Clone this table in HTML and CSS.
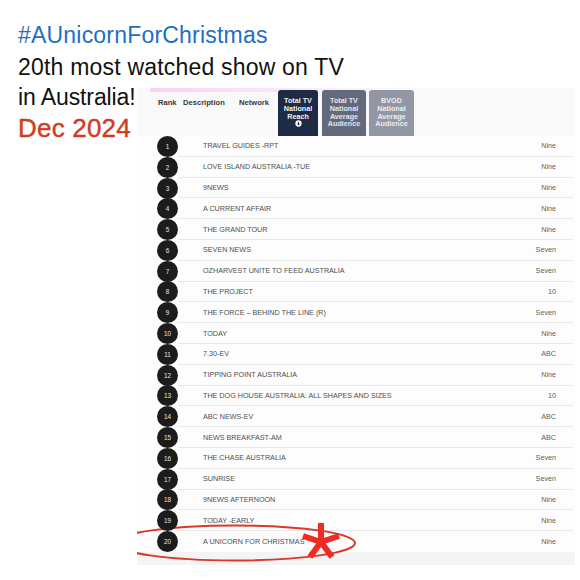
FILE: index.html
```html
<!DOCTYPE html>
<html>
<head>
<meta charset="utf-8">
<link rel="stylesheet" href="styles.css">
</head>
<body>
<div class="page">
  <div class="l1">#AUnicornForChristmas</div>
  <div class="l2">20th most watched show on TV</div>
  <div class="row">
    <div class="left">
      <div class="l3">in Australia!</div>
      <div class="l4">Dec 2024</div>
    </div>
    <div class="shot">
      <div class="thead">
        <span class="h h-rank">Rank</span>
        <span class="h h-desc">Description</span>
        <span class="h h-net">Network</span>
        <div class="tab t1">Total TV<br>National<br>Reach<br><svg class="ico" viewBox="0 0 8 8" width="7" height="7"><circle cx="4" cy="4" r="3.6" fill="#fff"/><path d="M4 2.2v3.2M2.6 4.2L4 5.6L5.4 4.2" stroke="#1d2a45" stroke-width="1.1" fill="none"/></svg></div>
        <div class="tab t2">Total TV<br>National<br>Average<br>Audience</div>
        <div class="tab t3">BVOD<br>National<br>Average<br>Audience</div>
      </div>
      <div class="rows">
        <div class="tr"><span class="num">1</span><div class="cell"><span>TRAVEL GUIDES -RPT</span><span class="net">Nine</span></div></div>
        <div class="tr"><span class="num">2</span><div class="cell"><span>LOVE ISLAND AUSTRALIA -TUE</span><span class="net">Nine</span></div></div>
        <div class="tr"><span class="num">3</span><div class="cell"><span>9NEWS</span><span class="net">Nine</span></div></div>
        <div class="tr"><span class="num">4</span><div class="cell"><span>A CURRENT AFFAIR</span><span class="net">Nine</span></div></div>
        <div class="tr"><span class="num">5</span><div class="cell"><span>THE GRAND TOUR</span><span class="net">Nine</span></div></div>
        <div class="tr"><span class="num">6</span><div class="cell"><span>SEVEN NEWS</span><span class="net">Seven</span></div></div>
        <div class="tr"><span class="num">7</span><div class="cell"><span>OZHARVEST UNITE TO FEED AUSTRALIA</span><span class="net">Seven</span></div></div>
        <div class="tr"><span class="num">8</span><div class="cell"><span>THE PROJECT</span><span class="net">10</span></div></div>
        <div class="tr"><span class="num">9</span><div class="cell"><span>THE FORCE – BEHIND THE LINE (R)</span><span class="net">Seven</span></div></div>
        <div class="tr"><span class="num">10</span><div class="cell"><span>TODAY</span><span class="net">Nine</span></div></div>
        <div class="tr"><span class="num">11</span><div class="cell"><span>7.30-EV</span><span class="net">ABC</span></div></div>
        <div class="tr"><span class="num">12</span><div class="cell"><span>TIPPING POINT AUSTRALIA</span><span class="net">Nine</span></div></div>
        <div class="tr"><span class="num">13</span><div class="cell"><span>THE DOG HOUSE AUSTRALIA: ALL SHAPES AND SIZES</span><span class="net">10</span></div></div>
        <div class="tr"><span class="num">14</span><div class="cell"><span>ABC NEWS-EV</span><span class="net">ABC</span></div></div>
        <div class="tr"><span class="num">15</span><div class="cell"><span>NEWS BREAKFAST-AM</span><span class="net">ABC</span></div></div>
        <div class="tr"><span class="num">16</span><div class="cell"><span>THE CHASE AUSTRALIA</span><span class="net">Seven</span></div></div>
        <div class="tr"><span class="num">17</span><div class="cell"><span>SUNRISE</span><span class="net">Seven</span></div></div>
        <div class="tr"><span class="num">18</span><div class="cell"><span>9NEWS AFTERNOON</span><span class="net">Nine</span></div></div>
        <div class="tr"><span class="num">19</span><div class="cell"><span>TODAY -EARLY</span><span class="net">Nine</span></div></div>
        <div class="tr last"><span class="num">20</span><div class="cell"><span>A UNICORN FOR CHRISTMAS</span><span class="net">Nine</span></div></div>
      </div>
      <div class="foot"></div>
      <svg class="mark" viewBox="0 0 438 477" width="438" height="477">
        <ellipse cx="98" cy="455" rx="120" ry="17.5" fill="none" stroke="#d8392b" stroke-width="2"/>
        <g stroke="#ee2c25" stroke-width="6" stroke-linecap="butt">
          <line x1="184" y1="454" x2="184" y2="435"/>
          <line x1="184" y1="454" x2="202" y2="448"/>
          <line x1="184" y1="454" x2="166" y2="448"/>
          <line x1="184" y1="454" x2="195" y2="469"/>
          <line x1="184" y1="454" x2="173" y2="469"/>
        </g>
      </svg>
    </div>
  </div>
</div>
</body>
</html>
```
FILE: styles.css
```css
* { box-sizing: border-box; }
html, body { margin: 0; padding: 0; background: #fff; }
body { width: 580px; height: 580px; overflow: hidden; font-family: "Liberation Sans", Arial, sans-serif; }
.page { padding: 19px 0 0 18px; }
.l1 { font-size: 23px; line-height: 32px; color: #1f6fbf; white-space: nowrap; letter-spacing: 0.2px; }
.l2 { font-size: 23px; line-height: 32px; color: #111; white-space: nowrap; letter-spacing: 0.2px; }
.row { display: flex; align-items: flex-start; }
.left { width: 119px; flex-shrink: 0; white-space: nowrap; }
.l3 { font-size: 23px; line-height: 28px; color: #111; letter-spacing: -0.1px; }
.l4 { font-size: 26px; line-height: 34px; color: #d33a22; -webkit-text-stroke: 0.4px #d33a22; letter-spacing: 0.2px; }
.shot {
  position: relative;
  width: 438px;
  height: 477px;
  margin-top: 5px;
  overflow: hidden;
  background: linear-gradient(to right, #f6d4f3, #fae8f8 45%, rgba(250,240,250,0) 75%) no-repeat 13px 0 / 320px 4px, #f9f9f9;
}
.thead { height: 48px; display: flex; align-items: flex-start; padding: 2px 0 0 21px; }
.h { font-size: 7.6px; font-weight: bold; color: #3a3a3a; margin-top: 9px; line-height: 8px; }
.h-rank { width: 25px; }
.h-desc { width: 56px; }
.h-net { width: 39px; }
.tab {
  height: 46px;
  border-radius: 3px 3px 0 0;
  padding-top: 7px;
  text-align: center;
  font-size: 7.2px;
  line-height: 7.8px;
  font-weight: bold;
  color: #f0f1f5;
}
.t1 { width: 40px; background: #1e2b47; }
.t2 { width: 44px; background: #646a7e; margin-left: 4px; color: #e4e6ee; }
.t3 { width: 45px; background: #9296a5; margin-left: 3px; color: #eceef3; }
.ico { display: inline-block; vertical-align: top; }
.rows { background: #fdfdfd; }
.tr { display: flex; align-items: center; height: 20.8px; padding-left: 20px; }
.num {
  width: 21px; height: 21px; border-radius: 50%;
  background: #1c1c1c; color: #e6e6e6;
  font-size: 6.4px; line-height: 21px; text-align: center;
  flex-shrink: 0;
  position: relative; z-index: 1;
}
.cell {
  flex: 1;
  height: 100%;
  display: flex; align-items: center; justify-content: space-between;
  padding-left: 25px; padding-right: 17px;
  margin-right: 2px;
  border-bottom: 1px solid #e9e9e9;
  font-size: 7.2px; color: #4e4e4e;
  white-space: nowrap;
}
.tr.last .cell { border-bottom: none; }
.net { color: #5e5e5e; }
.foot { height: 13px; background: #f4f4f4; }
.mark { position: absolute; left: 0; top: 0; pointer-events: none; }
```
